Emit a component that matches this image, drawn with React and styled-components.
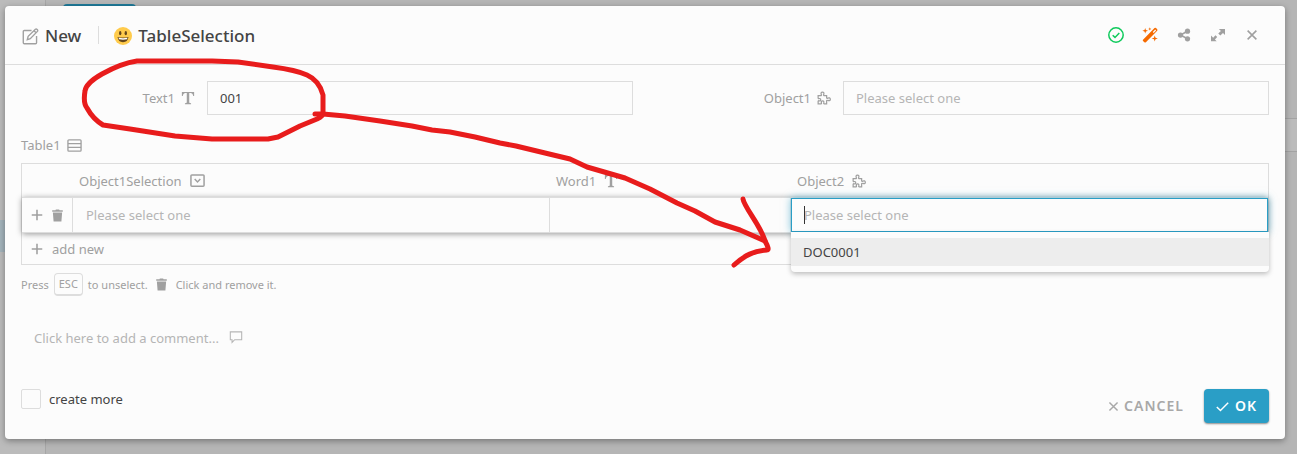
import React from 'react'
import styled, { createGlobalStyle } from 'styled-components'

const GlobalStyle = createGlobalStyle`
  * {
    box-sizing: border-box;
  }
  body {
    margin: 0;
    background: #b5b5b5;
    color: #444;
    font-family: 'Noto Sans', 'Open Sans', sans-serif;
    font-size: 13px;
    line-height: 18px;
  }
  button, input {
    font: inherit;
    color: inherit;
  }
`

const Page = styled.div`
  display: flex;
  min-height: 100vh;
`
const Sidebar = styled.aside`
  width: 46px;
  padding-top: 220px;
  border-right: 1px solid #a6a6a6;
  background: #bbb;
`
const SidebarMark = styled.div`
  height: 32px;
  background: #a3b3bb;
`
const Backdrop = styled.main`
  flex: 1;
`
const BackdropTab = styled.div`
  width: 73px;
  height: 34px;
  margin: 4px 0 0 17px;
  border-radius: 4px;
  background: #1f7a99;
`
const BackdropBar = styled.div`
  height: 34px;
  margin-top: 80px;
  border: 1px solid #a3a3a3;
  border-right: 0;
  background: #bbb;
`

const Overlay = styled.div`
  position: absolute;
  inset: 0;
  padding: 6px 12px 15px 5px;
`
const Dialog = styled.section`
  border-radius: 4px;
  background: #fcfcfc;
  box-shadow: 0 2px 6px rgba(0, 0, 0, 0.35);
`
const Header = styled.header`
  display: flex;
  align-items: center;
  height: 59px;
  padding: 0 24px 0 16px;
  border-bottom: 1px solid #ddd;
`
const Title = styled.h1`
  display: flex;
  align-items: center;
  gap: 6px;
  margin: 0;
  padding-top: 2px;
  font-size: 17px;
  line-height: 24px;
  font-weight: 500;
`
const Divider = styled.span`
  width: 1px;
  height: 18px;
  margin: 0 15px 0 17px;
  background: #ddd;
`
const Tools = styled.div`
  display: flex;
  gap: 16px;
  margin-left: auto;
`
const ToolButton = styled.button`
  display: flex;
  align-items: center;
  justify-content: center;
  width: 18px;
  height: 18px;
  padding: 0;
  border: 0;
  background: transparent;
  color: ${(props) => props.$color || '#a0a0a0'};
  cursor: pointer;
`
const Svg = styled.svg`
  display: block;
  flex: none;
  width: ${(props) => props.$size || 16}px;
  height: ${(props) => props.$size || 16}px;
`

const Body = styled.form`
  padding: 16px;
`
const FieldGrid = styled.div`
  display: grid;
  grid-template-columns: 1fr 1fr;
  gap: 24px;
`
const Field = styled.div`
  display: flex;
  align-items: center;
`
const Label = styled.label`
  display: flex;
  align-items: center;
  justify-content: flex-end;
  gap: 6px;
  width: 186px;
  padding-right: 12px;
  color: #a0a0a0;
`
const TextInput = styled.input`
  flex: 1;
  min-width: 0;
  height: 34px;
  padding: 0 12px;
  border: 1px solid #ddd;
  border-radius: 0;
  outline: 0;
  background: #fcfcfc;
  &::placeholder {
    color: #b5b5b5;
    opacity: 1;
  }
`
const SectionLabel = styled.h2`
  display: flex;
  align-items: center;
  gap: 6px;
  margin: 21px 0 9px;
  color: #a0a0a0;
  font-size: 13px;
  font-weight: 400;
`
const Table = styled.table`
  width: 100%;
  table-layout: fixed;
  border: 1px solid #ddd;
  border-spacing: 0;
  color: #a0a0a0;
`
const ActionCol = styled.col`
  width: 51px;
`
const WordCol = styled.col`
  width: 241px;
`
const HeadCell = styled.th`
  height: 33px;
  padding: 0 6px;
  text-align: left;
  font-weight: 400;
`
const HeadText = styled.span`
  display: flex;
  align-items: center;
  gap: 8px;
`
const ActiveRow = styled.tr`
  position: relative;
  box-shadow: 0 1px 6px rgba(0, 0, 0, 0.4);
`
const Cell = styled.td`
  position: relative;
  height: 36px;
  padding: 0;
  border: solid #ddd;
  border-width: 1px 1px 1px 0;
  background: #fcfcfc;
  &:last-child {
    border-right: 0;
  }
`
const RowActions = styled.div`
  display: flex;
  justify-content: center;
  gap: 2px;
`
const CellInput = styled(TextInput)`
  display: block;
  width: 100%;
  padding: 0 13px;
  border: 0;
`
const ActiveInput = styled(CellInput)`
  padding: 0 12px;
  border: 1px solid #2a9ec6;
  box-shadow: 0 0 8px rgba(42, 158, 198, 0.6);
  caret-color: transparent;
`
const Caret = styled.span`
  position: absolute;
  top: 8px;
  left: 13px;
  width: 1px;
  height: 18px;
  background: #333;
`
const Menu = styled.ul`
  position: absolute;
  top: 100%;
  left: 0;
  right: -1px;
  z-index: 2;
  margin: 0;
  padding: 6px 0;
  border-radius: 0 0 4px 4px;
  background: #fcfcfc;
  box-shadow: 0 2px 5px rgba(0, 0, 0, 0.25);
  list-style: none;
`
const Option = styled.li`
  padding: 5px 12px;
  background: #ededed;
  color: #444;
`
const AddButton = styled.button`
  display: flex;
  align-items: center;
  gap: 8px;
  height: 31px;
  padding: 0 8px;
  border: 0;
  background: transparent;
  color: #a0a0a0;
  cursor: pointer;
`
const FootCell = styled.td`
  padding: 0;
`
const Hint = styled.p`
  display: flex;
  align-items: center;
  gap: 5px;
  margin: 8px 0 0;
  color: #a0a0a0;
  font-size: 11px;
`
const Key = styled.kbd`
  padding: 1px 4px;
  border: 1px solid #ddd;
  border-bottom-width: 2px;
  border-radius: 4px;
  font: inherit;
`
const CommentButton = styled.button`
  display: flex;
  align-items: center;
  gap: 10px;
  margin: 33px 0 0 13px;
  padding: 0;
  border: 0;
  background: transparent;
  color: #b5b5b5;
  cursor: text;
`
const Footer = styled.footer`
  display: flex;
  align-items: flex-start;
  gap: 20px;
  margin-top: 42px;
`
const CheckLabel = styled.label`
  display: flex;
  align-items: center;
  gap: 8px;
  margin-right: auto;
`
const Checkbox = styled.input`
  appearance: none;
  width: 20px;
  height: 20px;
  margin: 0;
  border: 1px solid #ddd;
  border-radius: 2px;
`
const Button = styled.button`
  display: flex;
  align-items: center;
  gap: ${(props) => (props.$primary ? '6px' : '4px')};
  height: 34px;
  padding: ${(props) => (props.$primary ? '0 12px' : '0')};
  border: 0;
  border-radius: 4px;
  background: ${(props) => (props.$primary ? '#2a9ec6' : 'transparent')};
  box-shadow: ${(props) => (props.$primary ? '0 1px 2px rgba(0, 0, 0, 0.45)' : 'none')};
  color: ${(props) => (props.$primary ? '#fff' : '#a8a8a8')};
  font-size: 14px;
  font-weight: 600;
  letter-spacing: 1px;
  cursor: pointer;
`
const Annotation = styled.svg`
  position: absolute;
  top: 0;
  left: 0;
  width: 1297px;
  height: 454px;
  pointer-events: none;
`

const Line = ({ size, width = 1.4, children }) => (
  <Svg $size={size} viewBox="0 0 16 16" fill="none" stroke="currentColor" strokeWidth={width} aria-hidden="true">
    {children}
  </Svg>
)
const Solid = ({ size, children }) => (
  <Svg $size={size} viewBox="0 0 16 16" fill="currentColor" aria-hidden="true">
    {children}
  </Svg>
)

const EditIcon = () => (
  <Line size={17} width={1.3}>
    <path d="M9 2.300H2.200a1 1 0 0 0-1 1v10.500a1 1 0 0 0 1 1h10.500a1 1 0 0 0 1-1V7.500" />
    <path d="M5 11l.8-3.200 6.800-6.600q.8-.6 1.700.2t.2 1.800L7.800 10.100zM11.300 2.500l2 2" />
  </Line>
)
const SmileIcon = () => (
  <Svg $size={18} viewBox="0 0 18 18" aria-hidden="true">
    <circle cx="9" cy="9" r="9" fill="#ffcb4c" />
    <ellipse cx="6.200" cy="6.200" rx="1.200" ry="2.100" fill="#65471b" />
    <ellipse cx="11.800" cy="6.200" rx="1.200" ry="2.100" fill="#65471b" />
    <path d="M3.500 10q5.500 1.200 11 0q-.8 5.200-5.500 5.200t-5.500-5.200z" fill="#65471b" />
    <path d="M4.500 10.800q4.500.8 9 0l-.5 1.500q-4 .7-8 0z" fill="#fff" />
  </Svg>
)
const CheckCircleIcon = () => (
  <Line width={1.5}>
    <circle cx="8" cy="8" r="7.200" />
    <path d="M4.700 8.200l2.300 2.200 4.300-4.500" />
  </Line>
)
const WandIcon = () => (
  <Solid>
    <path fillRule="evenodd" d="M1 12.800L12.500 1q.7-.6 1.500 0l1.200 1.200q.6.800 0 1.500L3.900 15.200q-.8.600-1.500 0L1 14q-.5-.6 0-1.200zM10.800 5l.9.900 2.400-2.400-.9-.9z" />
    <path d="M3.200 1l.7 2.100L6 3.800l-2.100.7-.7 2.100-.7-2.100L.3 3.800l2.200-.7zM12.700 8.500l.8 2.300 2.300.7-2.300.8-.8 2.300-.7-2.300-2.400-.8 2.400-.7zM7.800.3l.4 1.200 1.200.4-1.200.5-.4 1.200-.4-1.200-1.200-.5 1.200-.4z" />
  </Solid>
)
const ShareIcon = () => (
  <Solid size={14}>
    <circle cx="4" cy="8" r="3" />
    <circle cx="12" cy="3.700" r="3" />
    <circle cx="12" cy="12.300" r="3" />
    <path d="M4 8l8-4.300M4 8l8 4.300" stroke="currentColor" strokeWidth="1.700" />
  </Solid>
)
const ExpandIcon = () => (
  <Solid size={14}>
    <path d="M9 1h7v7l-2.300-2.300-3 3-2.400-2.400 3-3zM0 8.500v6.500h6.500l-2-2 2.600-2.600-2-2-2.600 2.600z" />
  </Solid>
)
const CloseIcon = ({ size = 14 }) => (
  <Line size={size} width={1.8}>
    <path d="M3 3l10 10M13 3L3 13" />
  </Line>
)
const TextIcon = () => (
  <Solid size={14}>
    <path d="M1 1.200h14v4.600h-1Q13.400 2.400 10.800 2.400H9.400v10.400q0 1.200 2.100 1.200v1H4.500v-1q2.100 0 2.100-1.200V2.400H5.200Q2.600 2.400 2 5.800H1z" />
  </Solid>
)
const PuzzleIcon = () => (
  <Line size={14} width={1.4}>
    <path d="M1.300 5.300H4.700q.8-.4.200-1.200Q4 1.300 6.200 1.200t1.500 2.700q-.6 1 .3 1.400h3v2.500q.3 1 1.200.4Q15 7 15.200 9.300t-2.700 1.500q-1.200-.6-1.500.3v3.500H8q-.6-.3-.3-1 .5-2.300-1.300-2.300T5 13.500q.4 1-.4 1.100H1.300v-3q.3-.8 1-.4 1.900.4 1.900-1.300T2.300 8.700q-.8.300-1-.5z" />
  </Line>
)
const TableIcon = () => (
  <Line size={15} width={1.4}>
    <rect x="1" y="2" width="14" height="12" rx="1" />
    <path d="M1 6h14M1 10h14" />
  </Line>
)
const SelectIcon = () => (
  <Line size={15} width={1.6}>
    <rect x="1" y="2" width="14" height="12" rx="1" />
    <path d="M5 6.500l3 3 3-3" />
  </Line>
)
const TrashIcon = () => (
  <Solid size={13}>
    <path d="M1.500 1.600h4L6 .5h4l.5 1.100h4v1.900h-13zM2.300 4.300h11.400l-.9 11.200H3.200z" />
  </Solid>
)
const PlusIcon = ({ size = 12 }) => (
  <Line size={size} width={1.8}>
    <path d="M8 2v12M2 8h12" />
  </Line>
)
const CommentIcon = () => (
  <Line size={14} width={1.2}>
    <path d="M1.500 1h13v9H6.500L3.500 13V10h-2z" />
  </Line>
)
const CheckIcon = () => (
  <Line size={13} width={1.8}>
    <path d="M1 8.500l4.500 4.500L15 3.500" />
  </Line>
)

export default function App() {
  return (
    <>
      <GlobalStyle />
      <Page>
        <Sidebar>
          <SidebarMark />
        </Sidebar>
        <Backdrop>
          <BackdropTab />
          <BackdropBar />
        </Backdrop>
      </Page>
      <Overlay>
        <Dialog role="dialog" aria-label="TableSelection">
          <Header>
            <Title>
              <ToolButton as="span"><EditIcon /></ToolButton>
              New
            </Title>
            <Divider />
            <Title as="h2">
              <SmileIcon />
              TableSelection
            </Title>
            <Tools>
              <ToolButton $color="#0fca5c" aria-label="Saved"><CheckCircleIcon /></ToolButton>
              <ToolButton $color="#f56a00" aria-label="Design"><WandIcon /></ToolButton>
              <ToolButton aria-label="Share"><ShareIcon /></ToolButton>
              <ToolButton aria-label="Expand"><ExpandIcon /></ToolButton>
              <ToolButton aria-label="Close"><CloseIcon /></ToolButton>
            </Tools>
          </Header>
          <Body onSubmit={(e) => e.preventDefault()}>
            <FieldGrid>
              <Field>
                <Label htmlFor="text1">Text1 <TextIcon /></Label>
                <TextInput id="text1" defaultValue="001" />
              </Field>
              <Field>
                <Label htmlFor="object1">Object1 <PuzzleIcon /></Label>
                <TextInput id="object1" role="combobox" aria-expanded="false" placeholder="Please select one" />
              </Field>
            </FieldGrid>
            <SectionLabel>Table1 <TableIcon /></SectionLabel>
            <Table>
              <colgroup>
                <ActionCol />
                <col />
                <WordCol />
                <col />
              </colgroup>
              <thead>
                <tr>
                  <HeadCell />
                  <HeadCell><HeadText>Object1Selection <SelectIcon /></HeadText></HeadCell>
                  <HeadCell><HeadText>Word1 <TextIcon /></HeadText></HeadCell>
                  <HeadCell><HeadText>Object2 <PuzzleIcon /></HeadText></HeadCell>
                </tr>
              </thead>
              <tbody>
                <ActiveRow>
                  <Cell>
                    <RowActions>
                      <ToolButton type="button" aria-label="Insert row"><PlusIcon size={14} /></ToolButton>
                      <ToolButton type="button" aria-label="Remove row"><TrashIcon /></ToolButton>
                    </RowActions>
                  </Cell>
                  <Cell><CellInput role="combobox" aria-expanded="false" aria-label="Object1Selection" placeholder="Please select one" /></Cell>
                  <Cell><CellInput aria-label="Word1" /></Cell>
                  <Cell>
                    <ActiveInput role="combobox" aria-expanded="true" aria-label="Object2" placeholder="Please select one" />
                    <Caret />
                    <Menu role="listbox">
                      <Option role="option">DOC0001</Option>
                    </Menu>
                  </Cell>
                </ActiveRow>
              </tbody>
              <tfoot>
                <tr>
                  <FootCell colSpan={4}>
                    <AddButton type="button"><PlusIcon size={14} /> add new</AddButton>
                  </FootCell>
                </tr>
              </tfoot>
            </Table>
            <Hint>
              Press <Key>ESC</Key> to unselect.
              <ToolButton as="span"><TrashIcon /></ToolButton>
              Click and remove it.
            </Hint>
            <CommentButton type="button">Click here to add a comment... <CommentIcon /></CommentButton>
            <Footer>
              <CheckLabel>
                <Checkbox type="checkbox" />
                create more
              </CheckLabel>
              <Button type="button"><CloseIcon size={13} /> CANCEL</Button>
              <Button $primary><CheckIcon /> OK</Button>
            </Footer>
          </Body>
        </Dialog>
        <Annotation viewBox="0 0 1297 454" fill="none" stroke="#e81c1c" strokeWidth="5" strokeLinecap="round" strokeLinejoin="round" aria-hidden="true">
          <path d="M315 114L323 114L345 116L380 121L412 126L432 130L450 132L475 137L500 143L516 146L545 153L570 159L587 167L625 178L650 189L677 203L695 211L715 222L740 230L765 241" />
          <path d="M743 199C744 207 761 226 765 241Q770 250 767 250C754 251 745 255 734 265" />
          <path d="M323 114L323 95C321 87 316 79 307 75Q296 70 273 67L238 62L212 61L137 61C123 63 111 69 102 74Q86 83 85 91Q83 103 87 108Q93 119 103 125L130 129L175 136L212 139L268 139L278 137L300 126L317 119Q323 116 323 114" />
        </Annotation>
      </Overlay>
    </>
  )
}
